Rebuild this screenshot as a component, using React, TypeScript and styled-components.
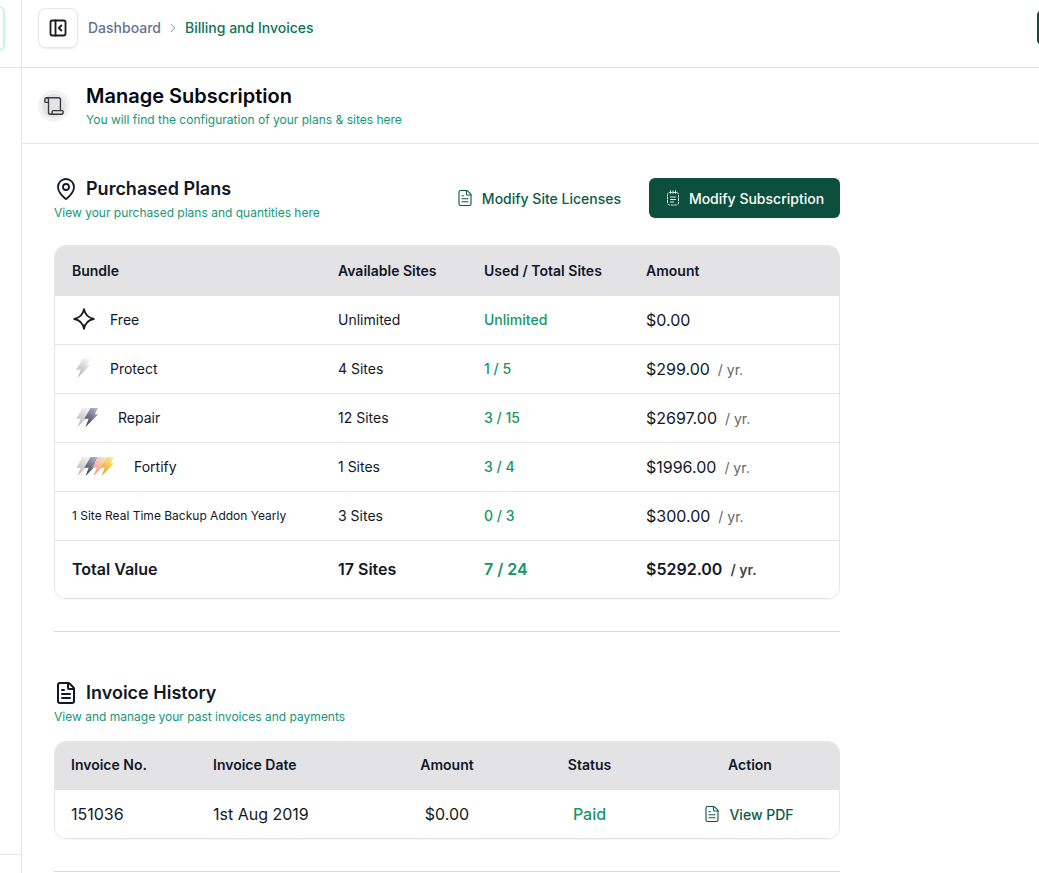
import React from "react";
import styled, { createGlobalStyle } from "styled-components";
import { ChevronRight, FileText, MapPin, PanelLeftClose, Scroll } from "lucide-react";

const Global = createGlobalStyle`
  html, body { margin: 0; padding: 0; background: #fff; overflow: hidden; height: 873px; }
  * { box-sizing: border-box; }
  body { font-family: Inter, "Liberation Sans", sans-serif; color: #111827; }
`;

const Page = styled.div`
  display: flex;
  width: 1039px;
  height: 873px;
  overflow: hidden;
`;
const Sidebar = styled.aside`
  width: 22px;
  flex: none;
  height: 873px;
  border-right: 1px solid #e3e5ee;
  display: flex;
  flex-direction: column;
  overflow: hidden;
`;
const SideTop = styled.div`
  height: 68px;
  flex: none;
  border-bottom: 1px solid #e3e3e8;
  padding-top: 6px;
`;
const SideButton = styled.div`
  width: 44px;
  height: 45px;
  margin-left: -39px;
  border: 2px solid #c6f6e2;
  border-radius: 6px;
  background: #fff;
`;
const SideSpacer = styled.div`
  flex: 1;
`;
const SideFoot = styled.div`
  height: 19px;
  flex: none;
  border-top: 1px solid #e6e6ea;
`;
const Main = styled.main`
  flex: 1;
  min-width: 0;
  display: flex;
  flex-direction: column;
`;
const TopBar = styled.header`
  height: 68px;
  flex: none;
  border-bottom: 1px solid #dcdce2;
  padding: 0 0 0 16px;
  display: flex;
  align-items: center;
  position: relative;
`;
const SquareButton = styled.button`
  width: 40px;
  height: 40px;
  border: 1px solid #e6e6e9;
  border-radius: 8px;
  background: #fff;
  box-shadow: 0 1px 2px rgba(0, 0, 0, 0.08);
  display: flex;
  align-items: center;
  justify-content: center;
  color: #1c1c1c;
  padding: 0;
  margin-top: -11px;
`;
const Crumbs = styled.nav`
  display: flex;
  align-items: center;
  margin: -12px 0 0 10px;
  font-size: 14px;
  font-weight: 500;
  color: #64748b;
  gap: 5px;
`;
const CrumbNow = styled.span`
  color: #0d7358;
`;
const TopRight = styled.div`
  position: absolute;
  left: 1015px;
  top: 10px;
  width: 40px;
  height: 35px;
  border: 2px solid #14493b;
  border-radius: 5px;
`;
const PageHead = styled.section`
  height: 76px;
  flex: none;
  border-bottom: 1px solid #e6e6ea;
  padding: 0 0 0 16px;
  display: flex;
  align-items: center;
  gap: 16px;
`;
const IconHalo = styled.div`
  width: 32px;
  height: 32px;
  border-radius: 50%;
  background: #f3f3f4;
  display: flex;
  align-items: center;
  justify-content: center;
  color: #3a3a3a;
`;
const IconDisc = styled.div`
  width: 24px;
  height: 24px;
  border-radius: 50%;
  background: #e4e4e6;
  display: flex;
  align-items: center;
  justify-content: center;
`;
const HeadText = styled.div`
  margin-top: 1px;
`;
const HeadTitle = styled.h1`
  margin: 0 0 4px;
  font-size: 20px;
  line-height: 24px;
  font-weight: 600;
  color: #05070f;
`;
const Sub = styled.p`
  margin: 0;
  font-size: 12px;
  line-height: 16px;
  color: #14977a;
`;
const Content = styled.div`
  width: 818px;
  padding: 0 0 0 32px;
  display: flex;
  flex-direction: column;
`;
const SectionHead = styled.div<{ $top: number }>`
  display: flex;
  justify-content: space-between;
  align-items: flex-start;
  margin-top: ${(p) => p.$top}px;
`;
const TitleRow = styled.div`
  display: flex;
  align-items: center;
  gap: 8px;
  height: 24px;
  color: #111827;
`;
const SectionTitle = styled.h2`
  margin: 0;
  font-size: 18px;
  line-height: 24px;
  font-weight: 600;
  color: #111827;
`;
const SectionSub = styled(Sub)`
  margin-top: 4px;
`;
const Actions = styled.div`
  display: flex;
  align-items: center;
  gap: 28px;
  margin-top: 1px;
`;
const GhostAction = styled.button`
  display: flex;
  align-items: center;
  gap: 8px;
  border: 0;
  background: none;
  padding: 0;
  font: 500 14px Inter, sans-serif;
  color: #0d5a48;
`;
const SolidAction = styled.button`
  width: 191px;
  height: 40px;
  display: flex;
  align-items: center;
  justify-content: center;
  gap: 8px;
  border: 0;
  border-radius: 6px;
  background: #0b4f3c;
  color: #fff;
  font: 500 14px Inter, sans-serif;
`;
const Card = styled.div<{ $top: number }>`
  margin-top: ${(p) => p.$top}px;
  border: 1px solid #e4e4e7;
  border-radius: 12px;
  overflow: hidden;
  box-shadow: 0 1px 1px rgba(0, 0, 0, 0.04);
`;
const PlanRow = styled.div<{ $h: number; $head?: boolean; $total?: boolean; $last?: boolean }>`
  display: grid;
  grid-template-columns: 266px 146px 162px 1fr;
  align-items: center;
  height: ${(p) => p.$h}px;
  padding: 0 0 2px 17px;
  background: ${(p) => (p.$head ? "#e3e3e6" : "#fff")};
  border-bottom: ${(p) => (p.$last || p.$head ? "0" : "1px solid #e6e6e8")};
  font-size: ${(p) => (p.$total ? "16px" : "14px")};
  font-weight: ${(p) => (p.$head || p.$total ? 600 : 400)};
  color: #111827;
`;
const Bundle = styled.div`
  display: flex;
  align-items: center;
  gap: 14px;
`;
const SmallName = styled.span`
  font-size: 12px;
`;
const Used = styled.span`
  color: #169568;
  font-weight: 500;
`;
const UsedTotal = styled.span`
  color: #169568;
  font-weight: 600;
`;
const AmountCell = styled.span`
  padding-top: 2px;
`;
const Money = styled.span`
  font-size: 16px;
`;
const Per = styled.span<{ $bold?: boolean }>`
  font-size: 14px;
  margin-left: 8px;
  color: ${(p) => (p.$bold ? "#444" : "#666")};
`;
const Divider = styled.hr<{ $top: number }>`
  width: 100%;
  height: 1px;
  border: 0;
  background: #d9d9dc;
  margin: ${(p) => p.$top}px 0 0;
`;
const InvoiceRow = styled.div<{ $h: number; $head?: boolean }>`
  display: grid;
  grid-template-columns: 142px 163px 142px 143px 1fr;
  align-items: center;
  height: ${(p) => p.$h}px;
  padding: ${(p) => (p.$head ? "0 0 3px 16px" : "0 0 0 16px")};
  background: ${(p) => (p.$head ? "#e3e3e6" : "#fff")};
  font-size: ${(p) => (p.$head ? "14px" : "16px")};
  font-weight: ${(p) => (p.$head ? 600 : 400)};
  color: #111827;
`;
const Center = styled.span`
  display: flex;
  justify-content: center;
`;
const Paid = styled(Center)`
  color: #169568;
  font-weight: 500;
`;
const PdfLink = styled(Center)`
  align-items: center;
  gap: 8px;
  padding-right: 3px;
  font-size: 14px;
  font-weight: 500;
  color: #0d5a48;
`;

const Star = () => (
  <svg width="24" height="24" viewBox="0 0 24 24" fill="none" stroke="#1c1c1c" strokeWidth="1.8" strokeLinejoin="round">
    <path d="M12 2.200c1.100 5.800 3.900 8.700 9.800 9.800-5.900 1.100-8.700 4-9.800 9.800-1.100-5.800-3.900-8.700-9.800-9.800 5.900-1.100 8.700-4 9.800-9.800z" />
  </svg>
);

const boltColours: [string, string][] = [
  ["#f3f3f4", "#b4b4b8"],
  ["#aeb3cb", "#34384e"],
  ["#fcdcd0", "#f4957a"],
  ["#fde89a", "#e8a008"],
];

const Bolts = ({ count, id }: { count: number; id: string }) => (
  <svg width={24 + (count - 1) * 8} height="24" viewBox={`0 0 ${24 + (count - 1) * 8} 24`}>
    <defs>
      {boltColours.slice(0, count).map(([a, b], i) => (
        <linearGradient key={i} id={`${id}${i}`} x1="0.8" y1="0" x2="0.2" y2="1">
          <stop offset="0" stopColor={a} />
          <stop offset="1" stopColor={b} />
        </linearGradient>
      ))}
    </defs>
    {boltColours.slice(0, count).map((_, i) => (
      <path
        key={i}
        transform={`translate(${i * 8} 0)`}
        fill={`url(#${id}${i})`}
        d="M10.500 3H18L14.800 9.300H18.200L5.500 22L8.700 13.800H4.300Z"
      />
    ))}
  </svg>
);

const DashedDoc = () => (
  <svg width="16" height="16" viewBox="0 0 16 16" fill="none" stroke="#e8f1ee" strokeWidth="1" strokeLinecap="round">
    <rect x="2.500" y="2.500" width="11" height="12.500" rx="2" strokeDasharray="2 1.500" />
    <path d="M5.500 .8v2.500M8 .8v2.500M10.500 .8v2.500M5.500 7h5M5.500 9.500h5M5.500 12h3" />
  </svg>
);

const plans = [
  { icon: <Star />, name: "Free", sites: "Unlimited", used: "Unlimited", amount: "$0.00", per: "" },
  { icon: <Bolts count={1} id="p" />, name: "Protect", sites: "4 Sites", used: "1 / 5", amount: "$299.00", per: "/ yr." },
  { icon: <Bolts count={2} id="r" />, name: "Repair", sites: "12 Sites", used: "3 / 15", amount: "$2697.00", per: "/ yr." },
  { icon: <Bolts count={4} id="f" />, name: "Fortify", sites: "1 Sites", used: "3 / 4", amount: "$1996.00", per: "/ yr." },
];

export default function App() {
  return (
    <Page>
      <Global />
      <Sidebar>
        <SideTop>
          <SideButton />
        </SideTop>
        <SideSpacer />
        <SideFoot />
      </Sidebar>
      <Main>
        <TopBar>
          <SquareButton aria-label="Collapse sidebar">
            <PanelLeftClose size={20} strokeWidth={2.2} />
          </SquareButton>
          <Crumbs>
            <span>Dashboard</span>
            <ChevronRight size={14} strokeWidth={1.5} />
            <CrumbNow>Billing and Invoices</CrumbNow>
          </Crumbs>
          <TopRight />
        </TopBar>
        <PageHead>
          <IconHalo>
            <IconDisc>
              <Scroll size={22} strokeWidth={1.5} />
            </IconDisc>
          </IconHalo>
          <HeadText>
            <HeadTitle>Manage Subscription</HeadTitle>
            <Sub>You will find the configuration of your plans &amp; sites here</Sub>
          </HeadText>
        </PageHead>
        <Content>
          <SectionHead $top={33}>
            <div>
              <TitleRow>
                <MapPin size={24} strokeWidth={1.8} />
                <SectionTitle>Purchased Plans</SectionTitle>
              </TitleRow>
              <SectionSub>View your purchased plans and quantities here</SectionSub>
            </div>
            <Actions>
              <GhostAction>
                <FileText size={18} strokeWidth={1.5} />
                Modify Site Licenses
              </GhostAction>
              <SolidAction>
                <DashedDoc />
                Modify Subscription
              </SolidAction>
            </Actions>
          </SectionHead>
          <Card $top={24}>
            <PlanRow $h={50} $head>
              <span>Bundle</span>
              <span>Available Sites</span>
              <span>Used / Total Sites</span>
              <span>Amount</span>
            </PlanRow>
            {plans.map((p) => (
              <PlanRow $h={49} key={p.name}>
                <Bundle>
                  {p.icon}
                  <span>{p.name}</span>
                </Bundle>
                <span>{p.sites}</span>
                <Used>{p.used}</Used>
                <AmountCell>
                  <Money>{p.amount}</Money>
                  {p.per && <Per>{p.per}</Per>}
                </AmountCell>
              </PlanRow>
            ))}
            <PlanRow $h={49}>
              <SmallName>1 Site Real Time Backup Addon Yearly</SmallName>
              <span>3 Sites</span>
              <Used>0 / 3</Used>
              <AmountCell>
                <Money>$300.00</Money>
                <Per>/ yr.</Per>
              </AmountCell>
            </PlanRow>
            <PlanRow $h={57} $total $last>
              <span>Total Value</span>
              <span>17 Sites</span>
              <UsedTotal>7 / 24</UsedTotal>
              <span>
                $5292.00
                <Per $bold>/ yr.</Per>
              </span>
            </PlanRow>
          </Card>
          <Divider $top={32} />
          <SectionHead $top={49}>
            <div>
              <TitleRow>
                <FileText size={24} strokeWidth={2} />
                <SectionTitle>Invoice History</SectionTitle>
              </TitleRow>
              <SectionSub>View and manage your past invoices and payments</SectionSub>
            </div>
          </SectionHead>
          <Card $top={16}>
            <InvoiceRow $h={48} $head>
              <span>Invoice No.</span>
              <span>Invoice Date</span>
              <Center>Amount</Center>
              <Center>Status</Center>
              <Center>Action</Center>
            </InvoiceRow>
            <InvoiceRow $h={48}>
              <span>151036</span>
              <span>1st Aug 2019</span>
              <Center>$0.00</Center>
              <Paid>Paid</Paid>
              <PdfLink>
                <FileText size={18} strokeWidth={1.5} />
                View PDF
              </PdfLink>
            </InvoiceRow>
          </Card>
          <Divider $top={32} />
        </Content>
      </Main>
    </Page>
  );
}
